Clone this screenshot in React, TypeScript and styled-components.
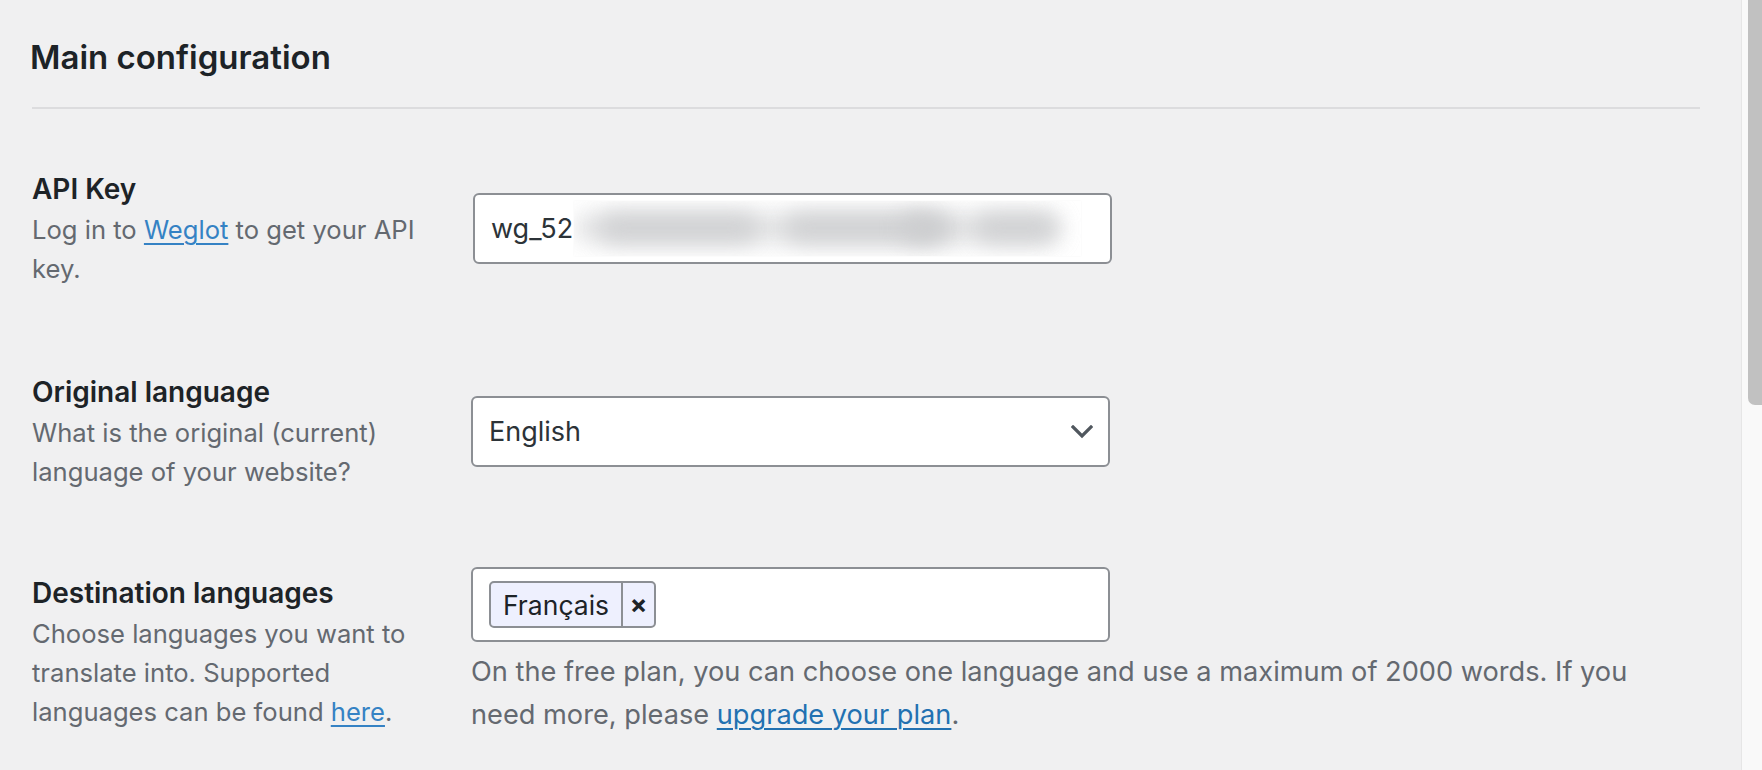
import React from "react";
import styled, { createGlobalStyle } from "styled-components";

const GlobalStyle = createGlobalStyle`
  html, body {
    margin: 0;
    padding: 0;
    height: 100%;
    overflow: hidden;
    background: #f0f0f1;
  }
  body {
    font-family: Inter, "Noto Sans", "Liberation Sans", sans-serif;
    color: #1d2327;
  }
  * { box-sizing: border-box; }
`;

type FieldProps = {
  label: string;
  top: number;
  description: React.ReactNode;
  children: React.ReactNode;
};

function SettingRow({ label, top, description, children }: FieldProps) {
  return (
    <Row $top={top}>
      <LeftCol>
        <Label>{label}</Label>
        <Description>{description}</Description>
      </LeftCol>
      <RightCol>{children}</RightCol>
    </Row>
  );
}

export default function App() {
  return (
    <>
      <GlobalStyle />
      <Page>
        <Main>
          <Heading>Main configuration</Heading>
          <Divider />

          <SettingRow
            label="API Key"
            top={60}
            description={
              <>
                Log in to <SoftLink href="#">Weglot</SoftLink> to get your API
                key.
              </>
            }
          >
            <InputBox $shift={2}>
              <span>wg_52</span>
              {/* hidden part of the key, blurred out */}
              <Redacted>
                <Smudge style={{ left: 0, width: 485, opacity: 0.55 }} />
                <Smudge style={{ left: 25, width: 160, opacity: 0.8 }} />
                <Smudge style={{ left: 210, width: 150, opacity: 0.8 }} />
                <Smudge style={{ left: 330, width: 50 }} />
                <Smudge style={{ left: 400, width: 85, opacity: 0.8 }} />
              </Redacted>
            </InputBox>
          </SettingRow>

          <SettingRow
            label="Original language"
            top={84}
            description="What is the original (current) language of your website?"
          >
            <InputBox>
              <span>English</span>
              <Chevron viewBox="0 0 22 14" aria-hidden>
                <path d="M2 2 L11 11 L20 2" />
              </Chevron>
            </InputBox>
          </SettingRow>

          <SettingRow
            label="Destination languages"
            top={76}
            description={
              <>
                Choose languages you want to translate into. Supported
                languages can be found <SoftLink href="#">here</SoftLink>.
              </>
            }
          >
            <TagBox>
              <Tag>
                <TagText>Français</TagText>
                <TagRemove>×</TagRemove>
              </Tag>
            </TagBox>
            <Help>
              On the free plan, you can choose one language and use a maximum
              of 2000 words. If you need more, please{" "}
              <StrongLink href="#">upgrade your plan</StrongLink>.
            </Help>
          </SettingRow>
        </Main>
        <ScrollTrack>
          <ScrollThumb />
        </ScrollTrack>
      </Page>
    </>
  );
}

/* ===== styled components ===== */

const Page = styled.div`
  display: flex;
  height: 770px;
  width: 1762px;
  overflow: hidden;
`;

const Main = styled.main`
  flex: 1;
  padding: 35px 41px 0 30px;
  display: flex;
  flex-direction: column;
`;

const Heading = styled.h2`
  margin: 0;
  font-size: 33px;
  line-height: 44px;
  font-weight: 600;
  color: #1d2327;
`;

const Divider = styled.hr`
  margin: 28px 0 0 2px;
  border: none;
  height: 2px;
  background: #dcdcde;
`;

const Row = styled.div<{ $top: number }>`
  display: flex;
  align-items: center;
  margin-top: ${(p) => p.$top}px;
`;

const LeftCol = styled.div`
  flex: 0 0 441px;
  padding-right: 41px;
  padding-left: 2px;
`;

const Label = styled.div`
  font-size: 28px;
  line-height: 41px;
  font-weight: 600;
  color: #1d2327;
`;

const Description = styled.div`
  font-size: 25.6px;
  line-height: 39px;
  color: #646970;
`;

const SoftLink = styled.a`
  color: #3582c4;
  text-decoration: underline;
  text-underline-offset: 4px;
  text-decoration-thickness: 2px;
`;

const StrongLink = styled(SoftLink)`
  color: #2271b1;
`;

const RightCol = styled.div`
  flex: 0 0 1190px;
  display: flex;
  flex-direction: column;
`;

const InputBox = styled.div<{ $shift?: number }>`
  width: 639px;
  height: 71px;
  margin-left: ${(p) => p.$shift ?? 0}px;
  background: #fff;
  border: 2px solid #8c8f94;
  border-radius: 6px;
  display: flex;
  align-items: center;
  justify-content: space-between;
  padding: 0 15px 0 16px;
  font-size: 27px;
  color: #2c3338;
`;

const Redacted = styled.span`
  position: relative;
  flex: 0 0 507px;
  height: 55px;
  margin-left: -2px;
  margin-right: 14px;
  background: #fff;
  box-shadow: 0 0 2px rgba(0, 0, 0, 0.04);
  overflow: hidden;
`;

const Smudge = styled.span`
  position: absolute;
  top: 12px;
  height: 30px;
  border-radius: 15px;
  background: #cbccce;
  filter: blur(11px);
`;

const Chevron = styled.svg`
  width: 22px;
  height: 14px;
  fill: none;
  stroke: #50575e;
  stroke-width: 3.2;
  stroke-linecap: square;
`;

const TagBox = styled.div`
  width: 639px;
  height: 75px;
  background: #fff;
  border: 2px solid #8c8f94;
  border-radius: 6px;
  display: flex;
  align-items: center;
  padding: 0 16px;
`;

const Tag = styled.div`
  display: flex;
  height: 47px;
  border: 2px solid #8c8f94;
  border-radius: 5px;
  background: #eef0fe;
  overflow: hidden;
`;

const TagText = styled.span`
  display: flex;
  align-items: center;
  padding: 0 12px 0 12px;
  font-size: 26.5px;
  color: #1d2327;
  border-right: 2px solid #8c8f94;
`;

const TagRemove = styled.span`
  display: flex;
  align-items: center;
  justify-content: center;
  width: 31px;
  font-size: 26px;
  font-weight: 700;
  color: #1d2327;
`;

const Help = styled.p`
  margin: 8px 0 0;
  font-size: 27.2px;
  line-height: 43px;
  color: #646970;
`;

const ScrollTrack = styled.aside`
  flex: 0 0 21px;
  background: #f9f9f9;
  border-left: 1px solid #e6e6e6;
  display: flex;
  justify-content: flex-end;
  align-items: flex-start;
`;

const ScrollThumb = styled.div`
  width: 14px;
  height: 405px;
  background: #c1c1c1;
  border-radius: 0 0 0 7px;
`;
